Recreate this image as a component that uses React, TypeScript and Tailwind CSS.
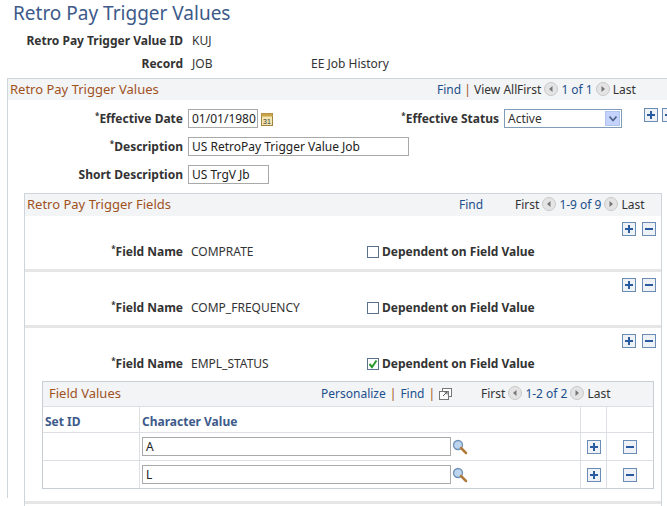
import React from "react";

const Btn = ({ minus }: { minus?: boolean }) => (
  <span className="inline-flex items-center justify-center w-[14px] h-[14px] border border-[#6b8db5] bg-[#eef2f7]">
    <svg width="10" height="10" viewBox="0 0 10 10">
      <rect x="1" y="4" width="8" height="2" fill="#2a5aa0" />
      {!minus && <rect x="4" y="1" width="2" height="8" fill="#2a5aa0" />}
    </svg>
  </span>
);

const Arrow = ({ right }: { right?: boolean }) => (
  <svg width="14" height="14" viewBox="0 0 14 14" className="inline-block mx-[3px] align-[-2px]">
    <circle cx="7" cy="7" r="6.5" fill="#e4e4e4" stroke="#c8c8c8" />
    {right ? <path d="M5.5 4 L9 7 L5.5 10 Z" fill="#777" /> : <path d="M8.5 4 L5 7 L8.5 10 Z" fill="#777" />}
  </svg>
);

const Lookup = () => (
  <svg width="16" height="16" viewBox="0 0 16 16">
    <circle cx="6" cy="6" r="4.5" fill="#bcd4ee" stroke="#6e8fb6" strokeWidth="1.3" />
    <path d="M9 9 L14 14" stroke="#b07a3a" strokeWidth="2.5" strokeLinecap="round" />
  </svg>
);

const Nav = ({ range, last }: { range: string; last: string }) => (
  <span className="text-[#333]">
    First<Arrow /><span className="text-[#1c4f8c]">{range}</span><Arrow right />{last}
  </span>
);

const Input = ({ v, w }: { v: string; w: string }) => (
  <div className={`${w} h-[19px] border border-[#a9a9a9] bg-white px-[3px] leading-[17px] text-[#222]`}>{v}</div>
);

const FieldRow = ({ name, checked, children }: { name: string; checked?: boolean; children?: React.ReactNode }) => (
  <div className="border-b-[3px] border-[#e6e6e6] pb-[8px]">
    <div className="flex justify-end gap-[6px] pr-[5px] pt-[6px]">
      <Btn /><Btn minus />
    </div>
    <div className="flex items-center mt-[7px]">
      <div className="w-[158px] text-right font-bold text-[#333]"><sup className="text-[8px]">*</sup>Field Name</div>
      <div className="ml-[8px] w-[176px] text-[#333]">{name}</div>
      <span className="w-[12px] h-[12px] border border-[#5a6f8a] bg-white inline-flex items-center justify-center">
        {checked && (
          <svg width="10" height="10" viewBox="0 0 10 10"><path d="M1.5 5 L4 8 L8.5 1.5" stroke="#2a9a2a" strokeWidth="2" fill="none" /></svg>
        )}
      </span>
      <span className="ml-[3px] font-bold text-[#333]">Dependent on Field Value</span>
    </div>
    {children}
  </div>
);

export default function App() {
  return (
    <div className="w-[667px] h-[506px] overflow-hidden bg-white text-[12px] whitespace-nowrap [font-family:'Liberation_Sans',Arial,sans-serif] text-[#333]">
      <div className="pl-[13px] pt-[2px] text-[19px] text-[#3d5a8a] leading-[22px]">Retro Pay Trigger Values</div>
      <div className="flex mt-[8px] h-[18px] items-center">
        <div className="w-[183px] text-right font-bold">Retro Pay Trigger Value ID</div>
        <div className="ml-[9px]">KUJ</div>
      </div>
      <div className="flex mt-[5px] h-[18px] items-center">
        <div className="w-[183px] text-right font-bold">Record</div>
        <div className="ml-[9px] w-[119px]">JOB</div>
        <div>EE Job History</div>
      </div>
      <div className="ml-[7px] mt-[5px] w-[680px] border border-[#cfd5dc] border-b-0 h-[420px]">
        <div className="h-[21px] bg-[#f2f4f6] flex items-center pl-[2px] text-[13px]">
          <span className="text-[#a0521d] w-[427px]">Retro Pay Trigger Values</span>
          <span className="text-[#1c4f8c] text-[12px] w-[80px]">Find <span className="text-[#a0521d]">|</span> <span className="text-[#333]">View All</span></span>
          <span className="text-[12px]"><Nav range="1 of 1" last="Last" /></span>
        </div>
        <div className="flex items-center mt-[9px]">
          <div className="w-[175px] text-right font-bold"><sup className="text-[8px]">*</sup>Effective Date</div>
          <div className="ml-[5px]"><Input v="01/01/1980" w="w-[70px]" /></div>
          <svg width="12" height="14" viewBox="0 0 12 14" className="ml-[3px]">
            <rect x="0.5" y="1.5" width="11" height="12" fill="#f4e6b0" stroke="#a08440" />
            <rect x="0.5" y="1.5" width="11" height="3" fill="#c9a44a" />
            <text x="2" y="12" fontSize="7" fill="#333" fontFamily="Liberation Sans">31</text>
          </svg>
          <div className="w-[226px] text-right font-bold"><sup className="text-[8px]">*</sup>Effective Status</div>
          <div className="ml-[5px] w-[118px] h-[19px] border border-[#7f9db9] flex items-center justify-between pl-[3px] pr-[1px]">
            <span>Active</span>
            <span className="w-[15px] h-[15px] bg-[#c3d3fd] border border-[#b0c4ee] flex items-center justify-center">
              <svg width="8" height="6" viewBox="0 0 8 6"><path d="M0.5 0.5 L4 4.5 L7.5 0.5" stroke="#4d6185" strokeWidth="1.6" fill="none" /></svg>
            </span>
          </div>
          <div className="ml-[22px] -mt-[8px] flex gap-[4px]"><Btn /><Btn minus /></div>
        </div>
        <div className="flex items-center mt-[9px]">
          <div className="w-[175px] text-right font-bold"><sup className="text-[8px]">*</sup>Description</div>
          <div className="ml-[5px]"><Input v="US RetroPay Trigger Value Job" w="w-[221px]" /></div>
        </div>
        <div className="flex items-center mt-[9px]">
          <div className="w-[175px] text-right font-bold">Short Description</div>
          <div className="ml-[5px]"><Input v="US TrgV Jb" w="w-[81px]" /></div>
        </div>
        <div className="ml-[16px] mt-[9px] w-[638px] border border-[#cfd5dc] border-b-0 h-[320px]">
          <div className="h-[22px] bg-[#f2f4f6] flex items-center pl-[2px] text-[13px]">
            <span className="text-[#a0521d] w-[432px]">Retro Pay Trigger Fields</span>
            <span className="text-[#1c4f8c] text-[12px] w-[56px]">Find</span>
            <span className="text-[12px]"><Nav range="1-9 of 9" last="Last" /></span>
          </div>
          <FieldRow name="COMPRATE" />
          <FieldRow name="COMP_FREQUENCY" />
          <FieldRow name="EMPL_STATUS" checked>
            <div className="ml-[17px] mt-[8px] w-[612px] border border-[#c8ced6]">
              <div className="h-[24px] bg-[#f2f4f6] flex items-center pl-[6px] text-[13px]">
                <span className="text-[#a0521d] w-[272px]">Field Values</span>
                <span className="text-[12px] text-[#1c4f8c] w-[160px] flex items-center">Personalize <span className="text-[#a0521d] mx-[4px]">|</span> Find <span className="text-[#a0521d] mx-[4px]">|</span>
                  <svg width="13" height="12" viewBox="0 0 13 12"><rect x="3.5" y="0.5" width="9" height="8" fill="#fff" stroke="#777" /><rect x="0.5" y="3.5" width="9" height="8" fill="#fff" stroke="#777" /><path d="M4 8 L8 4 M5.5 4 H8 V6.5" stroke="#555" fill="none" /></svg>
                </span>
                <span className="text-[12px]"><Nav range="1-2 of 2" last="Last" /></span>
              </div>
              <div className="flex h-[26px] border-t border-[#dcdfe3] bg-white font-bold text-[#3d5a8a]">
                <div className="w-[97px] border-r border-[#dcdfe3] pl-[2px] pt-[6px]">Set ID</div>
                <div className="w-[441px] border-r border-[#dcdfe3] pl-[2px] pt-[6px]">Character Value</div>
                <div className="w-[26px] border-r border-[#dcdfe3]" />
                <div className="flex-1" />
              </div>
              {["A", "L"].map((v) => (
                <div key={v} className="flex h-[28px] border-t border-[#dcdfe3] items-center">
                  <div className="w-[97px] h-full border-r border-[#dcdfe3]" />
                  <div className="w-[441px] h-full border-r border-[#dcdfe3] flex items-center pl-[2px] gap-[1px]">
                    <Input v={v} w="w-[309px]" />
                    <Lookup />
                  </div>
                  <div className="w-[26px] h-full border-r border-[#dcdfe3] flex items-center justify-center"><Btn /></div>
                  <div className="flex-1 h-full flex items-center justify-center"><Btn minus /></div>
                </div>
              ))}
            </div>
            <div className="h-[4px]" />
          </FieldRow>
        </div>
      </div>
    </div>
  );
}
